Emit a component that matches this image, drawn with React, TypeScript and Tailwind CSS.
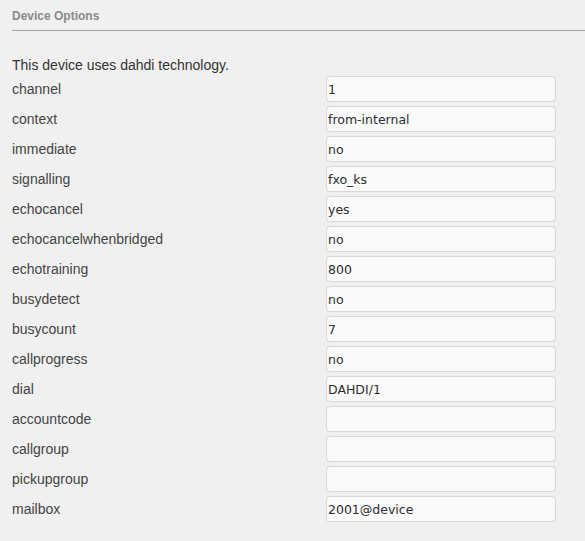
import React from "react";

const rows: [string, string][] = [
  ["channel", "1"],
  ["context", "from-internal"],
  ["immediate", "no"],
  ["signalling", "fxo_ks"],
  ["echocancel", "yes"],
  ["echocancelwhenbridged", "no"],
  ["echotraining", "800"],
  ["busydetect", "no"],
  ["busycount", "7"],
  ["callprogress", "no"],
  ["dial", "DAHDI/1"],
  ["accountcode", ""],
  ["callgroup", ""],
  ["pickupgroup", ""],
  ["mailbox", "2001@device"],
];

export default function App() {
  return (
    <div
      className="w-[585px] h-[541px] bg-[#f0f0f0] overflow-hidden"
      style={{ fontFamily: '"Liberation Sans", Arial, sans-serif' }}
    >
      <div className="ml-3 pt-2 pb-[6px] border-b border-[#a3a3a3] text-[12px] leading-4 font-bold text-[#8a8a8a]">
        Device Options
      </div>
      <div className="pl-3 mt-[26px] text-[14px] leading-4 text-[#333]">
        This device uses dahdi technology.
      </div>
      <div className="pl-3 mt-px flex flex-col">
        {rows.map(([label, value]) => (
          <div key={label} className="flex items-center h-[30px]">
            <div className="w-[314px] text-[14px] text-[#444] leading-4">{label}</div>
            <input
              readOnly
              value={value}
              className="w-[230px] h-[26px] box-border border border-[#d8d8d8] rounded-[4px] bg-[#fafafa] pl-px text-[12.5px] text-[#2e2e2e] outline-none shadow-[0_0_1px_rgba(0,0,0,0.06)]"
              style={{ fontFamily: '"DejaVu Sans", Verdana, sans-serif' }}
            />
          </div>
        ))}
      </div>
    </div>
  );
}
